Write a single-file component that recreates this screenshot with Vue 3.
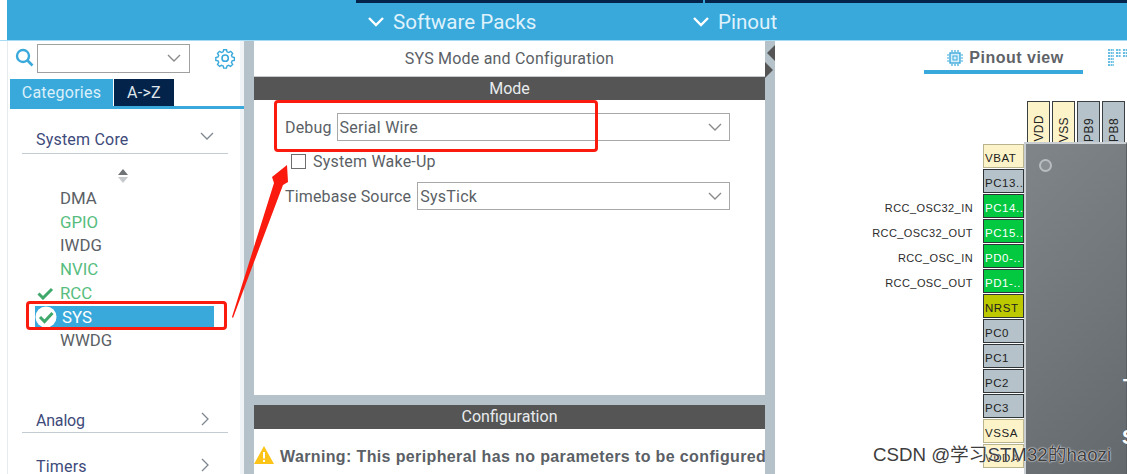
<script setup>
const items = [
  { name: 'DMA', cls: '' },
  { name: 'GPIO', cls: 'ok' },
  { name: 'IWDG', cls: '' },
  { name: 'NVIC', cls: 'ok' },
  { name: 'RCC', cls: 'ok', check: true },
  { name: 'SYS', cls: 'sel', circle: true },
  { name: 'WWDG', cls: '' }
]
const topPins = [
  { n: 'VDD', c: 'pw' }, { n: 'VSS', c: 'pw' }, { n: 'PB9', c: 'gr' }, { n: 'PB8', c: 'gr' }
]
const leftPins = [
  { n: 'VBAT', c: 'pw' }, { n: 'PC13..', c: 'gr' },
  { n: 'PC14..', c: 'gn', l: 'RCC_OSC32_IN' }, { n: 'PC15..', c: 'gn', l: 'RCC_OSC32_OUT' },
  { n: 'PD0-..', c: 'gn', l: 'RCC_OSC_IN' }, { n: 'PD1-..', c: 'gn', l: 'RCC_OSC_OUT' },
  { n: 'NRST', c: 'ye' }, { n: 'PC0', c: 'gr' }, { n: 'PC1', c: 'gr' }, { n: 'PC2', c: 'gr' },
  { n: 'PC3', c: 'gr' }, { n: 'VSSA', c: 'pw' }, { n: 'VDDA', c: 'pw' }
]
</script>

<template>
  <div class="page">
    <header class="top">
      <div class="strip">
        <i class="seg a"></i><i class="seg b"></i>
      </div>
      <div class="menu">
        <span class="m soft"><svg width="18" height="12" viewBox="0 0 18 12"><path d="M2 2l7 7 7-7" fill="none" stroke="#fff" stroke-width="2.4"/></svg>Software Packs</span>
        <span class="m pin"><svg width="18" height="12" viewBox="0 0 18 12"><path d="M2 2l7 7 7-7" fill="none" stroke="#fff" stroke-width="2.4"/></svg>Pinout</span>
      </div>
    </header>

    <div class="body">
      <aside class="side">
        <div class="search">
          <svg class="mag" width="19" height="20" viewBox="0 0 19 20"><circle cx="8" cy="8" r="6" fill="none" stroke="#39a9dc" stroke-width="2.4"/><path d="M12.5 12.5l5 5" stroke="#39a9dc" stroke-width="2.6"/></svg>
          <div class="combo"><svg width="14" height="9" viewBox="0 0 14 9"><path d="M1 1l6 6 6-6" fill="none" stroke="#8a8a8a" stroke-width="1.4"/></svg></div>
          <svg class="gear" width="21" height="21" viewBox="0 0 24 24"><path d="M12 2.5l1.7 0 .6 2.6 2 .8 2.3-1.4 2.4 2.4-1.4 2.3.8 2 2.6.6v3.4l-2.6.6-.8 2 1.4 2.3-2.4 2.4-2.3-1.4-2 .8-.6 2.6h-3.4l-.6-2.6-2-.8-2.3 1.4-2.4-2.4 1.4-2.3-.8-2-2.6-.6v-3.4l2.6-.6.8-2-1.4-2.3 2.4-2.4 2.3 1.4 2-.8.6-2.6z" fill="none" stroke="#39a9dc" stroke-width="1.7" transform="translate(0 -.5) scale(.96)"/><circle cx="11.6" cy="11.6" r="3.6" fill="none" stroke="#39a9dc" stroke-width="1.8"/></svg>
        </div>
        <div class="tabs"><span class="tab on">Categories</span><span class="tab off">A-&gt;Z</span></div>
        <div class="tree">
          <div class="cat first"><span>System Core</span><svg width="14" height="9" viewBox="0 0 14 9"><path d="M1 1l6 6 6-6" fill="none" stroke="#7d8790" stroke-width="1.3"/></svg></div>
          <svg class="sort" width="10" height="14" viewBox="0 0 10 14"><path d="M5 0l5 6H0z" fill="#6f7376"/><path d="M5 14l5-6H0z" fill="#c6cacd"/></svg>
          <ul class="list">
            <li v-for="it in items" :key="it.name" :class="it.cls">
              <svg v-if="it.check" class="chk" width="17" height="13" viewBox="0 0 17 13"><path d="M1.5 6.5l4.5 4.5 9-9" fill="none" stroke="#3fa86a" stroke-width="3"/></svg>
              <svg v-if="it.circle" class="circ" width="22" height="22" viewBox="0 0 22 22"><circle cx="11" cy="11" r="10.5" fill="#fff"/><path d="M5 11l4.5 4.5 8-8.5" fill="none" stroke="#3fa86a" stroke-width="3"/></svg>
              <span>{{ it.name }}</span>
            </li>
          </ul>
          <div class="cat analog"><span>Analog</span><svg width="9" height="14" viewBox="0 0 9 14"><path d="M1 1l6 6-6 6" fill="none" stroke="#7d8790" stroke-width="1.3"/></svg></div>
          <div class="cat timers"><span>Timers</span><svg width="9" height="14" viewBox="0 0 9 14"><path d="M1 1l6 6-6 6" fill="none" stroke="#7d8790" stroke-width="1.3"/></svg></div>
        </div>
      </aside>

      <div class="vsep"></div>

      <main class="center">
        <div class="modepane">
          <div class="title">SYS Mode and Configuration</div>
          <div class="bar mode">Mode</div>
          <div class="rows">
            <div class="row r1"><label>Debug</label><div class="sel-box"><span>Serial Wire</span><svg width="14" height="9" viewBox="0 0 14 9"><path d="M1 1l6 6 6-6" fill="none" stroke="#8a8a8a" stroke-width="1.4"/></svg></div></div>
            <div class="row r2"><i class="box"></i><span>System Wake-Up</span></div>
            <div class="row r3"><label>Timebase Source</label><div class="sel-box"><span>SysTick</span><svg width="14" height="9" viewBox="0 0 14 9"><path d="M1 1l6 6 6-6" fill="none" stroke="#8a8a8a" stroke-width="1.4"/></svg></div></div>
          </div>
        </div>
        <div class="hsep"></div>
        <div class="confpane">
          <div class="bar conf">Configuration</div>
          <div class="warn">
            <svg width="20" height="18" viewBox="0 0 20 18"><path d="M10 0l10 18H0z" fill="#fcc419"/><rect x="9" y="6" width="2" height="6.5" fill="#fff"/><rect x="9" y="14" width="2" height="2" fill="#fff"/></svg>
            <b>Warning: This peripheral has no parameters to be configured</b>
          </div>
        </div>
      </main>

      <div class="vsep narrow">
        <i class="tri l"></i><i class="tri r"></i>
      </div>

      <section class="pinout">
        <div class="views">
          <div class="view">
            <svg width="18" height="18" viewBox="0 0 18 18"><rect x="4" y="4" width="10" height="10" fill="#d9f0fa" stroke="#39a9dc" stroke-width="1.4"/><rect x="7" y="7" width="4" height="4" fill="none" stroke="#39a9dc"/><path d="M1 6h2M1 9h2M1 12h2M15 6h2M15 9h2M15 12h2M6 1v2M9 1v2M12 1v2M6 15v2M9 15v2M12 15v2" stroke="#39a9dc" stroke-width="1.2"/></svg>
            <span>Pinout view</span>
          </div>
          <svg class="sysv" width="19" height="18" viewBox="0 0 19 18"><path d="M0 1h6M0 4h6M0 7h6M0 10h6M0 13h6M0 16h6M8 1h5M8 4h5M8 7h5M15 1h4M15 4h4M15 7h4" stroke="#39a9dc" stroke-width="1.6" stroke-dasharray="2 .6"/></svg>
        </div>
        <div class="toppins">
          <div v-for="p in topPins" :key="p.n" class="tp" :class="p.c"><span>{{ p.n }}</span></div>
        </div>
        <div class="board">
          <div class="leftcol">
            <div v-for="p in leftPins" :key="p.n" class="lrow">
              <span class="lab">{{ p.l }}</span>
              <div class="lp" :class="p.c">{{ p.n }}</div>
            </div>
          </div>
          <div class="chip">
            <i class="dot"></i>
            <span class="chiptxt t1">T</span>
            <span class="chiptxt t2">S</span>
          </div>
        </div>
      </section>
    </div>

    <i class="red r-debug"></i>
    <i class="red r-sys"></i>
    <svg class="arrow" width="70" height="170" viewBox="0 0 70 170"><path d="M2 152L44 18 42 12 57 0 58 17 53 20 3 153z" fill="#fb1a0e"/></svg>
    <div class="mark">CSDN @学习STM32的haozi</div>
  </div>
</template>

<style>
html, body { margin: 0; background: #fff; }
</style>

<style scoped>
.page {
  position: relative;
  width: 1127px;
  height: 474px;
  overflow: hidden;
  background: #fff;
  font-family: Roboto, "Liberation Sans", sans-serif;
  color: #54565c;
}
.top { height: 40px; margin-left: 7px; background: #39a9dc; position: relative; }
.strip { display: flex; height: 3px; padding-left: 349px; gap: 2px; }
.seg { display: block; background: #03234b; height: 3px; }
.seg.a { width: 347px; }
.seg.b { flex: 1; }
.menu { display: flex; padding: 7px 0 0 360px; }
.m { display: flex; align-items: center; gap: 8px; color: #dff2fb; font-size: 20.6px; line-height: 24px; }
.m svg { flex: none; }
.soft { width: 325px; }
.body { display: flex; height: 434px; border-top: 1px solid #a6dcf3; box-sizing: border-box; }
.side {
  width: 237px; margin-left: 7px; box-sizing: border-box;
  border-left: 1px solid #e6ebef; overflow: hidden;
  background: linear-gradient(90deg, #fff 232px, #f1f4f7 232px);
}
.search { display: flex; align-items: center; height: 30px; margin-top: 2px; padding-left: 7px; }
.mag { margin-right: 3px; }
.combo {
  width: 153px; height: 29px; box-sizing: border-box; border: 1px solid #a0a0a0;
  display: flex; align-items: center; justify-content: flex-end; padding-right: 8px;
}
.gear { margin-left: 25px; }
.tabs { display: flex; margin: 6px 0 0 2px; gap: 1px; width: 234px; border-bottom: 3px solid #39a9dc; height: 27px; }
.tab { display: flex; align-items: center; justify-content: center; font-size: 16px; letter-spacing: .25px; color: #dcf0f9; }
.tab.on { width: 103px; background: #39a9dc; }
.tab.off { width: 60px; background: #03234b; color: #dfe5ea; }
.tree { padding: 0 0 0 14px; width: 206px; }
.cat { display: flex; justify-content: space-between; align-items: center; border-bottom: 1px solid #c3ccd3; font-size: 16px; color: #3d4a7a; height: 24px; padding-right: 14px; padding-left: 14px; }
.cat span { letter-spacing: .2px; }
.cat.first { margin-top: 17px; height: 27px; }
.cat.first svg { margin-top: -7px; }
.cat.analog { margin-top: 55px; height: 24px; padding-right: 18px; }
.cat.analog span { letter-spacing: -.2px; }
.cat.analog svg, .cat.timers svg { margin-top: -3px; }
.cat.timers { margin-top: 21px; border: 0; padding-right: 18px; }
.sort { display: block; margin: 15px 0 0 96px; }
.list { list-style: none; margin: 4px 0 0; padding: 0; }
.list li { position: relative; height: 23.7px; line-height: 23.7px; padding-left: 38px; font-size: 16.8px; color: #5b5f66; }
.list li.ok { color: #56bd7e; }
.list li.sel { background: #39a9dc; color: #fff; width: 179px; margin-left: 13px; padding-left: 27px; box-sizing: border-box; height: 22px; line-height: 22px; margin-top: 1px; margin-bottom: 1px; }
.chk { position: absolute; left: 15px; top: 5px; }
.circ { position: absolute; left: 0; top: 0; }
.vsep { width: 10px; background: #b5c2c9; flex: none; position: relative; }
.center { width: 511px; flex: none; display: flex; flex-direction: column; }
.modepane { height: 354px; }
.title { height: 35px; line-height: 35px; text-align: center; font-size: 16px; letter-spacing: .2px; color: #5b5f66; border-bottom: 1px solid #c4cad0; }
.bar { background: #545554; color: #e9ecee; text-align: center; font-size: 16px; }
.bar.mode { height: 23px; line-height: 23px; }
.rows { padding: 13px 0 0 31px; }
.row { display: flex; align-items: center; font-size: 16px; color: #5b5f66; }
.r1 { height: 28px; }
.r2 { height: 20px; margin-top: 10px; }
.r3 { height: 28px; margin-top: 11px; }
.row label { margin-right: 6px; letter-spacing: .15px; }
.r1 label { margin-right: 5px; }
.sel-box {
  flex: 1; height: 28px; box-sizing: border-box; border: 1px solid #a8a8a8; margin-right: 35px;
  display: flex; align-items: center; justify-content: space-between; padding: 0 7px 0 2px; letter-spacing: .25px;
}
.box { width: 15px; height: 15px; box-sizing: border-box; border: 1.5px solid #6e6e6e; margin: 0 7px 0 6px; display: block; }
.r2 span { letter-spacing: .2px; }
.hsep { height: 10px; background: #b5c2c9; }
.confpane { flex: 1; }
.bar.conf { height: 24px; line-height: 24px; }
.warn { display: flex; align-items: center; margin-top: 16px; height: 20px; overflow: hidden; }
.warn svg { flex: none; margin-right: 6px; margin-top: -1px; }
.warn b { font-size: 16px; font-weight: 700; color: #5b5f66; white-space: nowrap; font-family: "Liberation Sans", Arial, sans-serif; letter-spacing: .37px; margin-top: 3px; line-height: 18px; }
.narrow { width: 10px; }
.tri { position: absolute; width: 0; height: 0; border-style: solid; display: block; }
.tri.l { left: 2px; top: 4px; border-width: 8px 8px 8px 0; border-color: transparent #545554 transparent transparent; }
.tri.r { left: 0; top: 21px; border-width: 8px 0 8px 8px; border-color: transparent transparent transparent #545554; }
.pinout { flex: 1; min-width: 0; overflow: hidden; }
.views { display: flex; align-items: flex-start; height: 38px; margin-top: 4px; padding-left: 149px; }
.view {
  width: 159px; height: 29px; box-sizing: border-box; border-bottom: 4px solid #39a9dc;
  display: flex; align-items: center; justify-content: center; gap: 5px; color: #5f6368;
  font-size: 16px; font-weight: 700; letter-spacing: .5px; font-family: "Liberation Sans", sans-serif;
  padding-left: 3px;
}
.sysv { margin-left: 25px; flex: none; margin-top: 4px; }
.toppins { display: flex; gap: 2px; margin: 18px 0 0 252px; height: 41px; }
.tp {
  width: 23px; height: 41px; flex: none; box-sizing: border-box; border: 1px solid #3a3f42; border-bottom: 0;
  display: flex; align-items: flex-end; justify-content: center;
}
.tp span { writing-mode: vertical-rl; transform: rotate(180deg); font-size: 12px; color: #222; letter-spacing: .4px; font-family: "Liberation Sans", sans-serif; }
.pw { background: #fdf3c8; }
.gr { background: #b5c2c9; }
.gn { background: #03c940; color: #fff !important; }
.ye { background: #bdc900; }
.board { display: flex; align-items: flex-start; }
.leftcol { width: 249px; padding-top: 2px; flex: none; }
.lrow { display: flex; align-items: center; justify-content: flex-end; height: 25px; }
.lab { font-size: 11px; letter-spacing: .42px; color: #2c2c2c; margin-right: 10px; padding-top: 2px; font-family: "Liberation Sans", sans-serif; }
.lp {
  width: 41px; height: 24px; box-sizing: border-box; border: 1px solid #2f3437; padding: 6px 0 0 1px;
  font-size: 11.5px; line-height: 15px; letter-spacing: .55px; color: #222; white-space: nowrap; overflow: hidden;
  font-family: "Liberation Sans", sans-serif; margin-bottom: 1px;
}
.lp.pw { border-color: #b9b48e; }
.chip {
  flex: 1; height: 340px; position: relative; box-sizing: border-box;
  border: 1px solid #5a5f63; border-top: 2px solid #c9cfd3; border-left: 2px solid #c9cfd3;
  background: linear-gradient(135deg, #808589, #63686c);
}
.dot { position: absolute; left: 13px; top: 15px; width: 13px; height: 13px; box-sizing: border-box; border-radius: 50%; background: #8a8f93; border: 2px solid #b9bdc0; }
.chiptxt { position: absolute; color: #fff; font-weight: 700; font-size: 20px; font-family: "Liberation Sans", sans-serif; line-height: 20px; }
.t1 { left: 97px; top: 232px; }
.t2 { left: 96px; top: 283px; }

.red { position: absolute; display: block; box-sizing: border-box; border: 3px solid #fb1a0e; border-radius: 4px; }
.r-debug { left: 274px; top: 100px; width: 324px; height: 52px; }
.r-sys { left: 26px; top: 301px; width: 201px; height: 29px; }
.arrow { position: absolute; left: 230px; top: 165px; }
.mark {
  position: absolute; left: 873px; top: 443px; font-size: 18.7px; line-height: 24px; color: #3d3d3d; white-space: nowrap;
  font-family: "Liberation Sans", "Noto Sans CJK SC", sans-serif;
  text-shadow: 0 0 2px #fff, 0 0 1px #fff;
}
</style>
